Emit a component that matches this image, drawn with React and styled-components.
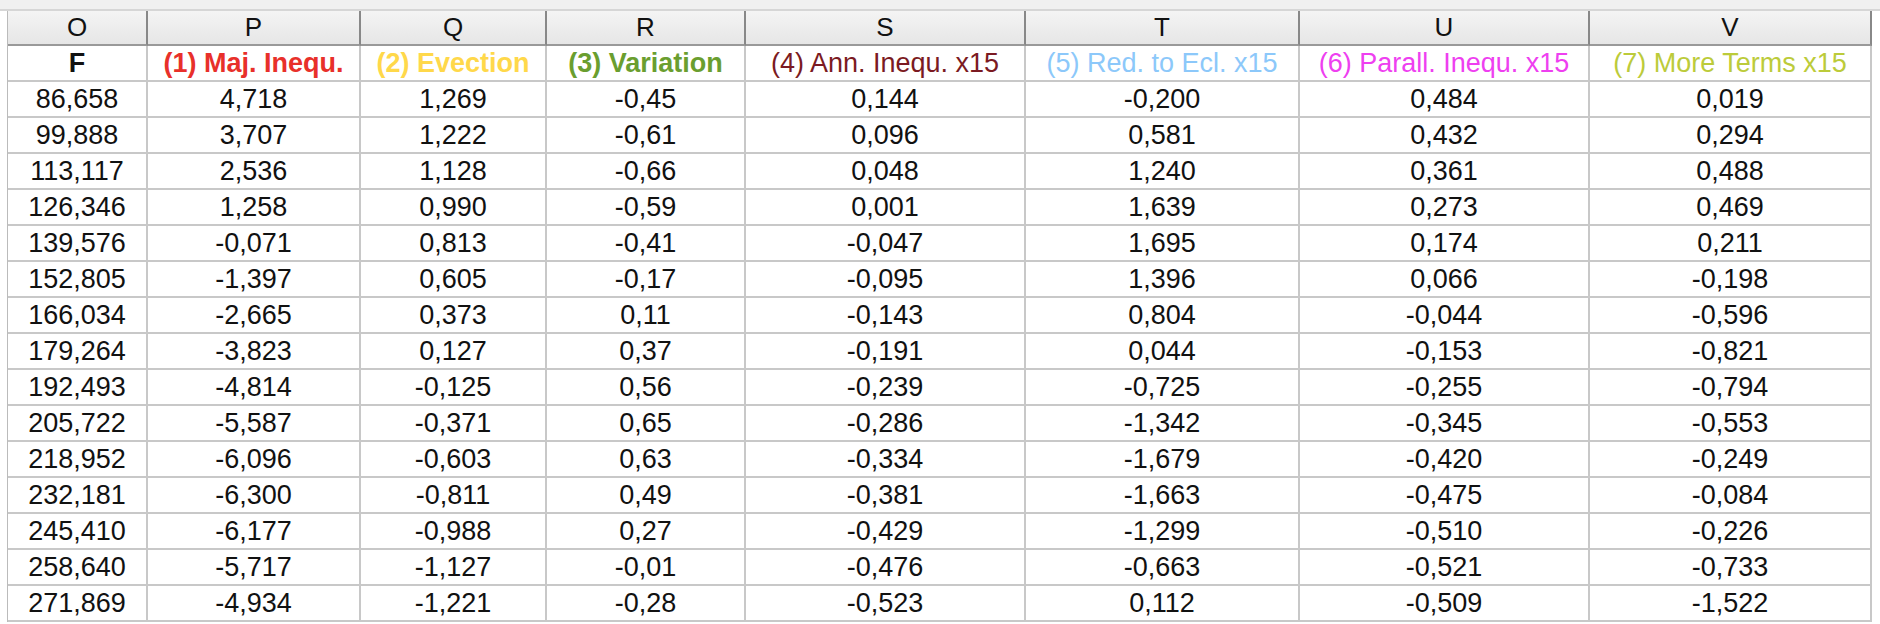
import React from "react";
import styled, { createGlobalStyle } from "styled-components";

const G = createGlobalStyle`
  body { margin: 0; background: #fff; font-family: "Liberation Sans", Arial, sans-serif; }
`;
const cols = "140px 213px 186px 199px 280px 274px 290px 282px";
const Top = styled.div`height: 9px; background: #f0f0f0; border-bottom: 2px solid #d6d6d6;`;
const Sheet = styled.div`
  margin-left: 7px; width: 1866px; display: grid; grid-template-columns: ${cols};
  border-left: 1px solid #bbb;
`;
const Letter = styled.div`
  height: 33px; display: flex; align-items: center; justify-content: center;
  background: linear-gradient(#f4f4f4, #e6e6e6); border-right: 2px solid #888;
  border-bottom: 2px solid #999; font-size: 26px; color: #111;
`;
const Cell = styled.div`
  height: 34px; display: flex; align-items: center; justify-content: center;
  border-right: 2px solid #c8c8c8; border-bottom: 2px solid #c8c8c8;
  font-size: 27px; color: ${p => p.$c || "#111"}; font-weight: ${p => p.$b ? 700 : 400};
  white-space: nowrap; overflow: hidden;
`;
const heads = [
  ["F", "#111", 1], ["(1) Maj. Inequ.", "#e8302a", 1], ["(2) Evection", "#ffd84a", 1],
  ["(3) Variation", "#6a9e2f", 1], ["(4) Ann. Inequ. x15", "#7b1a22", 0],
  ["(5) Red. to Ecl. x15", "#8cc8fa", 0], ["(6) Parall. Inequ. x15", "#ee3ff0", 0],
  ["(7) More Terms x15", "#bccb3a", 0],
];
const rows = `86,658 4,718 1,269 -0,45 0,144 -0,200 0,484 0,019
99,888 3,707 1,222 -0,61 0,096 0,581 0,432 0,294
113,117 2,536 1,128 -0,66 0,048 1,240 0,361 0,488
126,346 1,258 0,990 -0,59 0,001 1,639 0,273 0,469
139,576 -0,071 0,813 -0,41 -0,047 1,695 0,174 0,211
152,805 -1,397 0,605 -0,17 -0,095 1,396 0,066 -0,198
166,034 -2,665 0,373 0,11 -0,143 0,804 -0,044 -0,596
179,264 -3,823 0,127 0,37 -0,191 0,044 -0,153 -0,821
192,493 -4,814 -0,125 0,56 -0,239 -0,725 -0,255 -0,794
205,722 -5,587 -0,371 0,65 -0,286 -1,342 -0,345 -0,553
218,952 -6,096 -0,603 0,63 -0,334 -1,679 -0,420 -0,249
232,181 -6,300 -0,811 0,49 -0,381 -1,663 -0,475 -0,084
245,410 -6,177 -0,988 0,27 -0,429 -1,299 -0,510 -0,226
258,640 -5,717 -1,127 -0,01 -0,476 -0,663 -0,521 -0,733
271,869 -4,934 -1,221 -0,28 -0,523 0,112 -0,509 -1,522`.split("\n").map(r => r.split(" "));

export default function App() {
  return (
    <>
      <G />
      <Top />
      <Sheet>
        {"OPQRSTUV".split("").map(l => <Letter key={l}>{l}</Letter>)}
        {heads.map(([t, c, b]) => <Cell key={t} $c={c} $b={b}>{t}</Cell>)}
        {rows.flatMap((r, i) => r.map((v, j) => <Cell key={i + "-" + j}>{v}</Cell>))}
      </Sheet>
    </>
  );
}
